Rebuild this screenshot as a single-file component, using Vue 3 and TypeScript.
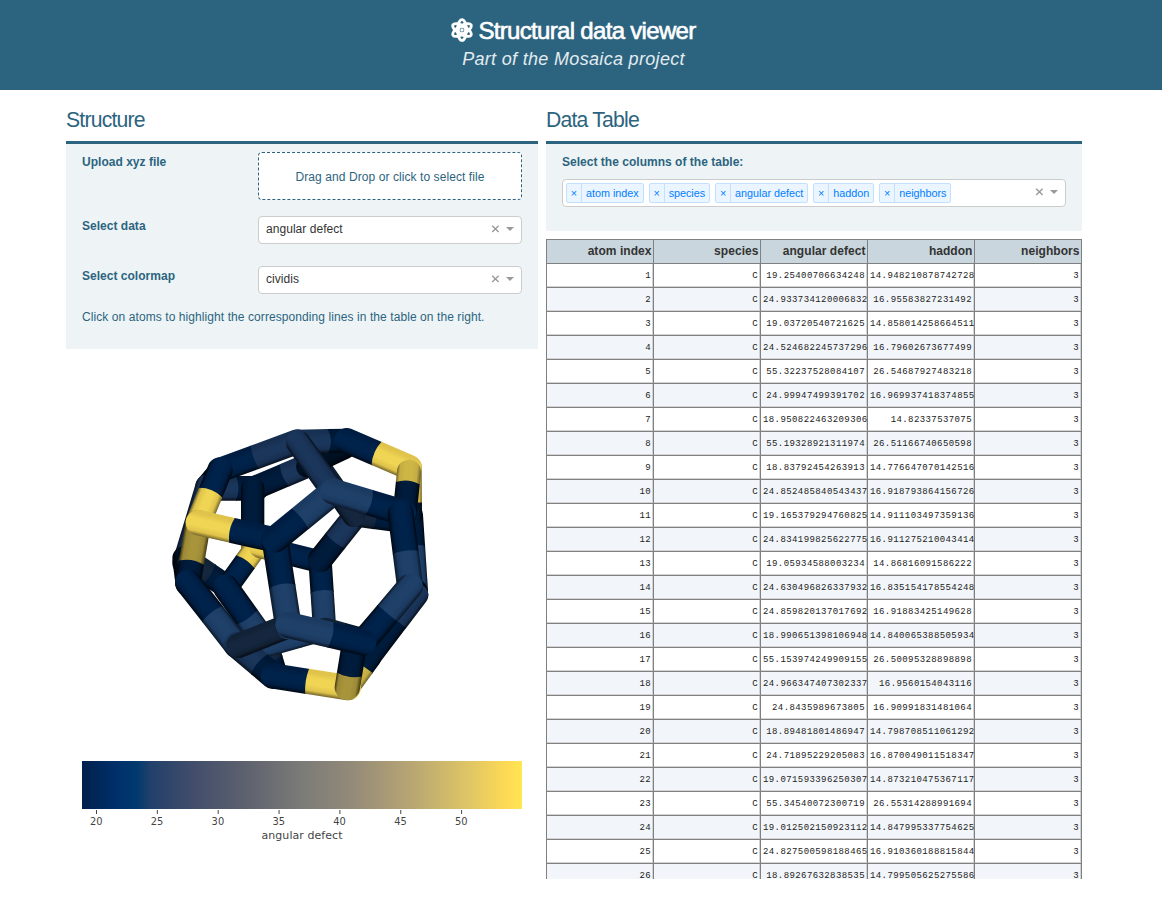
<script setup lang="ts">
interface Shape { d: string; id: string; x1: number; y1: number; x2: number; y2: number; edge: string; hi: string; mid: string; lo: string }
const palette: Record<string, [string, string, string]> = {
  n: ['#001d41', '#00234b', '#000812'],
  m: ['#001733', '#001c3c', '#00060e'],
  k: ['#000b1a', '#001123', '#000207'],
  b: ['#1b3a61', '#1f4068', '#0b1727'],
  c: ['#172f51', '#1b365b', '#08111e'],
  d: ['#112136', '#15273f', '#070c14'],
  y: ['#dfc34b', '#f0d453', '#73652a'],
  z: ['#9b8937', '#a8943a', '#403812'],
  w: ['#c3ad43', '#ceb646', '#6f6227'],
}
// start x/y, tone, end x/y, tone, split position, radius, bulge
type Bond = [number, number, string, number, number, string, number, number, number]
const bonds: Bond[] = [
  [185, 150, 'k', 143, 200, 'k', 0.5, 37, 0],
  [143, 200, 'c', 74, 430, 'c', 0.12, 37, 0],
  [74, 415, 'k', 82, 480, 'k', 0.5, 37, 0],
  [90, 425, 'd', 200, 500, 'm', 0.5, 36, 7],
  [160, 205, 'c', 290, 205, 'm', 0.52, 37, 8],
  [288, 202, 'm', 430, 142, 'c', 0.6, 36, -6],
  [278, 205, 'm', 278, 390, 'y', 0.6, 35, -5],
  [300, 365, 'y', 203, 500, 'n', 0.45, 34, -5],
  [300, 380, 'y', 480, 425, 'n', 0.3, 34, 0],
  [197, 502, 'n', 325, 682, 'b', 0.5, 39, 5],
  [325, 688, 'd', 345, 755, 'm', 0.42, 35, 7],
  [330, 680, 'b', 500, 632, 'b', 0.5, 28, 0],
  [480, 420, 'n', 494, 632, 'b', 0.45, 35, -5],
  [495, 630, 'd', 610, 662, 'm', 0.45, 37, 0],
  [480, 420, 'm', 582, 292, 'c', 0.45, 37, -5],
  [582, 288, 'd', 700, 304, 'm', 0.52, 31, 5],
  [582, 288, 'd', 450, 100, 'c', 0.4, 34, 0],
  [440, 140, 'k', 555, 85, 'k', 0.5, 32, 0],
  [757, 285, 'm', 772, 510, 'b', 0.42, 32, -4],
  [768, 510, 'k', 772, 522, 'k', 0.5, 33, 0],
  [772, 525, 'c', 630, 712, 'm', 0.42, 33, 0],
  [630, 712, 'm', 565, 802, 'w', 0.3, 34, 0],
  [756, 140, 'w', 757, 290, 'm', 0.72, 29, 0],
  [412, 65, 'c', 560, 62, 'm', 0.62, 36, 9],
  [560, 62, 'n', 747, 142, 'y', 0.48, 38, -7],
  [734, 280, 'm', 747, 155, 'w', 0.72, 36, 8],
  [412, 65, 'c', 180, 150, 'n', 0.55, 37, 4],
  [180, 150, 'n', 115, 308, 'y', 0.43, 38, -8],
  [115, 308, 'z', 84, 490, 'm', 0.66, 38, -8],
  [84, 488, 'n', 230, 675, 'b', 0.5, 39, -5],
  [230, 675, 'c', 340, 768, 'm', 0.62, 39, -7],
  [340, 768, 'n', 565, 803, 'y', 0.45, 38, -4],
  [415, 68, 'c', 520, 215, 'c', 0.5, 37, 0],
  [235, 677, 'd', 385, 618, 'd', 0.5, 37, 0],
  [115, 308, 'y', 345, 360, 'n', 0.44, 38, -7],
  [345, 360, 'n', 385, 618, 'b', 0.54, 40, -8],
  [345, 358, 'n', 520, 215, 'b', 0.43, 40, 5],
  [520, 215, 'b', 730, 278, 'n', 0.51, 39, 7],
  [722, 280, 'n', 750, 500, 'b', 0.53, 39, -5],
  [580, 692, 'm', 562, 802, 'z', 0.65, 38, 7],
  [750, 500, 'b', 612, 663, 'n', 0.49, 39, 0],
  [385, 615, 'b', 610, 668, 'n', 0.56, 39, 7],
]
function half(x: number, y: number, sx: number, sy: number, r: number, bulge: number, over: number, tone: string, id: string): Shape {
  const l = Math.hypot(sx - x, sy - y) || 1
  const ux = (sx - x) / l, uy = (sy - y) / l
  sx += ux * over
  sy += uy * over
  let px = -uy, py = ux
  if (py > 0 || (Math.abs(py) < 0.01 && px > 0)) { px = -px; py = -py }
  const sweep = ux * py - uy * px > 0 ? 1 : 0
  const [hi, mid, lo] = palette[tone]
  const d = `M${sx + px * r} ${sy + py * r}L${x + px * r} ${y + py * r}A${r} ${r} 0 0 ${sweep} ${x - px * r} ${y - py * r}L${sx - px * r} ${sy - py * r}Q${sx + ux * bulge * 2} ${sy + uy * bulge * 2} ${sx + px * r} ${sy + py * r}Z`
  return { d, id, x1: x + px * r, y1: y + py * r, x2: x - px * r, y2: y - py * r, edge: Math.abs(py) < 0.75 ? lo : hi, hi, mid, lo }
}
const shapes: Shape[] = bonds.flatMap(([x1, y1, a, x2, y2, b, t, r, bulge], i) => {
  const sx = x1 + (x2 - x1) * t, sy = y1 + (y2 - y1) * t
  return [half(x1, y1, sx, sy, r, bulge, 3, a, `a${i}`), half(x2, y2, sx, sy, r, -bulge, 0, b, `b${i}`)]
})

const columns = ['atom index', 'species', 'angular defect', 'haddon', 'neighbors']
const values: [string, string][] = [
  ['19.25400706634248', '14.948210878742728'], ['24.933734120006832', '16.95583827231492'],
  ['19.03720540721625', '14.858014258664511'], ['24.524682245737296', '16.79602673677499'],
  ['55.32237528084107', '26.54687927483218'], ['24.99947499391702', '16.969937418374855'],
  ['18.950822463209306', '14.82337537075'], ['55.19328921311974', '26.51166740650598'],
  ['18.83792454263913', '14.776647070142516'], ['24.852485840543437', '16.918793864156726'],
  ['19.165379294760825', '14.911103497359136'], ['24.834199825622775', '16.911275210043414'],
  ['19.05934588003234', '14.86816091586222'], ['24.630496826337932', '16.835154178554248'],
  ['24.859820137017692', '16.91883425149628'], ['18.990651398106948', '14.840065388505934'],
  ['55.153974249909155', '26.50095328898898'], ['24.966347407302337', '16.9560154043116'],
  ['24.8435989673805', '16.90991831481064'], ['18.89481801486947', '14.798708511061292'],
  ['24.71895229205083', '16.870049011518347'], ['19.071593396250307', '14.873210475367117'],
  ['55.34540072300719', '26.55314288991694'], ['19.012502150923112', '14.847995337754625'],
  ['24.827500598188465', '16.910360188815844'], ['18.89267632838535', '14.799505625275586'],
]
const rows = values.map(([a, h], i) => [String(i + 1), 'C', a, h, '3'])
const ticks = [20, 25, 30, 35, 40, 45, 50].map((v, i) => ({ v, x: 14.5 + i * 60.85 }))
const orbits = [0, 60, 120]
</script>

<template>
  <div class="page">
    <header class="top">
      <h1>
        <svg class="atom" viewBox="-11 -12 22 24">
          <ellipse v-for="o in orbits" :key="o" rx="4.4" ry="10.4" :transform="`rotate(${o})`" />
          <circle class="gap" r="3.1" />
          <circle class="core" r="1.7" />
        </svg>
        <span>Structural data viewer</span>
      </h1>
      <p>Part of the Mosaica project</p>
    </header>
    <main>
      <section class="left">
        <h2>Structure</h2>
        <div class="panel controls">
          <div class="field upload"><label>Upload xyz file</label><div class="drop"><span>Drag and Drop or click to select file</span></div></div>
          <div class="field"><label>Select data</label>
            <div class="select"><span class="val">angular defect</span><svg class="tools" viewBox="0 0 24 10"><path d="M1.2 1.7l6.4 6.4M7.6 1.7L1.2 8.1" /><path class="arrow" d="M15 3h8l-4 4z" /></svg></div></div>
          <div class="field"><label>Select colormap</label>
            <div class="select"><span class="val">cividis</span><svg class="tools" viewBox="0 0 24 10"><path d="M1.2 1.7l6.4 6.4M7.6 1.7L1.2 8.1" /><path class="arrow" d="M15 3h8l-4 4z" /></svg></div></div>
          <p class="hint">Click on atoms to highlight the corresponding lines in the table on the right.</p>
        </div>
        <svg class="molecule" viewBox="0 0 840 870">
          <defs>
            <linearGradient v-for="s in shapes" :id="s.id" :key="s.id" gradientUnits="userSpaceOnUse" :x1="s.x1" :y1="s.y1" :x2="s.x2" :y2="s.y2">
              <stop offset="0" :stop-color="s.edge" /><stop offset=".12" :stop-color="s.hi" /><stop offset=".35" :stop-color="s.mid" /><stop offset=".62" :stop-color="s.mid" /><stop offset=".84" :stop-color="s.hi" /><stop offset="1" :stop-color="s.lo" />
            </linearGradient>
          </defs>
          <path v-for="s in shapes" :key="s.id" :d="s.d" :fill="`url(#${s.id})`" />
        </svg>
        <svg class="bar" viewBox="0 0 440 90">
          <defs>
            <linearGradient id="cividis">
              <stop offset="0" stop-color="#00204c" /><stop offset=".08" stop-color="#00306b" /><stop offset=".125" stop-color="#003a6e" />
              <stop offset=".155" stop-color="#21406b" /><stop offset=".25" stop-color="#414d6b" /><stop offset=".38" stop-color="#5f636e" />
              <stop offset=".5" stop-color="#7b7b78" /><stop offset=".62" stop-color="#958b78" /><stop offset=".75" stop-color="#b8a673" />
              <stop offset=".88" stop-color="#dfc665" /><stop offset=".97" stop-color="#ffdb54" /><stop offset="1" stop-color="#ffe752" />
            </linearGradient>
          </defs>
          <rect width="440" height="48" fill="url(#cividis)" />
          <g v-for="t in ticks" :key="t.v"><path class="tick" :d="`M${t.x} 49v4`" /><text :x="t.x - 0.3" y="64" class="num">{{ t.v }}</text></g>
          <text x="220" y="78" class="name" textLength="81">angular defect</text>
        </svg>
      </section>
      <section class="right">
        <h2>Data Table</h2>
        <div class="panel pick">
          <label>Select the columns of the table:</label>
          <div class="select multi">
            <span v-for="c in columns" :key="c" class="tag"><i>×</i><b>{{ c }}</b></span>
            <svg class="tools" viewBox="0 0 24 10"><path d="M1.2 1.7l6.4 6.4M7.6 1.7L1.2 8.1" /><path class="arrow" d="M15 3h8l-4 4z" /></svg>
          </div>
        </div>
        <div class="table">
          <div class="row head"><div v-for="c in columns" :key="c" class="cell">{{ c }}</div></div>
          <div v-for="r in rows" :key="r[0]" class="row"><div v-for="(v, i) in r" :key="i" class="cell" :class="{ long: v.length > 17 }">{{ v }}</div></div>
        </div>
      </section>
    </main>
  </div>
</template>

<style>
body { margin: 0; background: #fff; }
</style>
<style scoped>
* { box-sizing: border-box; }
.page { width: 1162px; height: 903px; overflow: hidden; font-family: "Liberation Sans", Arial, sans-serif; color: #2c6480; font-size: 12px; background: #fff; }
.top { height: 90px; background: #2c6480; color: #fff; display: flex; flex-direction: column; align-items: center; padding: 16px 15px 0 0; }
h1 { margin: 0; height: 29px; display: flex; align-items: center; gap: 5px; font-weight: 400; font-size: 24px; letter-spacing: -.68px; white-space: nowrap; -webkit-text-stroke: .6px #fff; }
.atom { width: 22px; height: 24px; margin-top: -1px; fill: none; stroke: #fff; stroke-width: 2.8; }
.atom .gap { fill: #2c6480; stroke-width: 1.6; }
.atom .core { fill: #fff; stroke: none; }
.top p { margin: 3px 0 0; font-size: 18px; line-height: 22px; font-style: italic; letter-spacing: .32px; color: #e3ebef; }
main { display: flex; gap: 8px; padding-left: 66px; }
.left { width: 472px; }
.right { width: 536px; }
h2 { margin: 0; height: 51px; padding-top: 16px; font-size: 21.2px; line-height: 27px; font-weight: 400; letter-spacing: -.8px; }
.panel { background: #eef4f6; border-top: 3px solid #2c6480; padding: 8px 16px; }
.controls { height: 208px; }
.field { display: flex; justify-content: space-between; height: 50px; }
.upload { height: 64px; }
label { font-weight: 700; font-size: 12px; line-height: 20px; letter-spacing: .02px; }
.drop { width: 264px; height: 48px; border: 1px dashed #2c6480; border-radius: 4px; background: #fff; display: flex; align-items: center; justify-content: center; padding-top: 2px; font-size: 12px; letter-spacing: .08px; }
.select { width: 264px; height: 28px; border: 1px solid #ccc; border-radius: 4px; background: #fff; color: #333; display: flex; align-items: center; padding: 0 7px; }
.tools { width: 24px; height: 10px; margin-top: -2px; margin-left: auto; margin-right: -1px; stroke: #999; stroke-width: 1.35; fill: none; }
.tools .arrow { fill: #999; stroke: none; }
.val { letter-spacing: .05px; margin-top: -2px; }
.hint { margin: -9px 0 0; line-height: 20px; white-space: nowrap; letter-spacing: .08px; }
.molecule { display: block; width: 280px; height: 290px; margin: 71px 0 0 94px; }
.bar { display: block; width: 440px; height: 90px; margin: 51px 0 0 16px; }
.tick { stroke: #444; stroke-width: 1; }
.bar text { font-family: "DejaVu Sans", Verdana, sans-serif; fill: #444; text-anchor: middle; }
.num { font-size: 9.9px; }
.name { font-size: 11px; }
.pick { height: 90px; }
.pick label { display: block; }
.multi { width: 504px; margin-top: 7px; padding: 0 7px 0 3px; gap: 5px; }
.tag { display: flex; height: 20px; border: 1px solid #c2e0ff; border-radius: 2px; background: #ebf5ff; color: #007eff; font-size: 10.8px; line-height: 18px; letter-spacing: -.02px; }
.tag i { font-style: normal; width: 15px; text-align: center; border-right: 1px solid #c2e0ff; }
.tag b { font-weight: 400; padding: 0 4px; }
.table { margin-top: 8px; height: 640px; overflow: hidden; border-right: 1px solid #808080; }
.row { display: grid; grid-template-columns: repeat(5, 107px); height: 24px; font: 9px/22px "Liberation Mono", monospace; letter-spacing: .41px; color: #222; }
.row:nth-child(odd) { background: #f2f6fa; }
.cell { border-left: 1px solid #808080; border-top: 1px solid #808080; box-shadow: inset -1px -1px #d3d3d3; text-align: right; padding: 1px 2px 0; white-space: nowrap; overflow: hidden; }
.cell.long { text-align: left; }
.row.head { background: #c9d6dd; color: #333; font: 700 12px/22px "Liberation Sans", Arial, sans-serif; letter-spacing: 0; }
.head .cell { box-shadow: none; padding: 0 1.5px 0 0; letter-spacing: .05px; }
</style>
